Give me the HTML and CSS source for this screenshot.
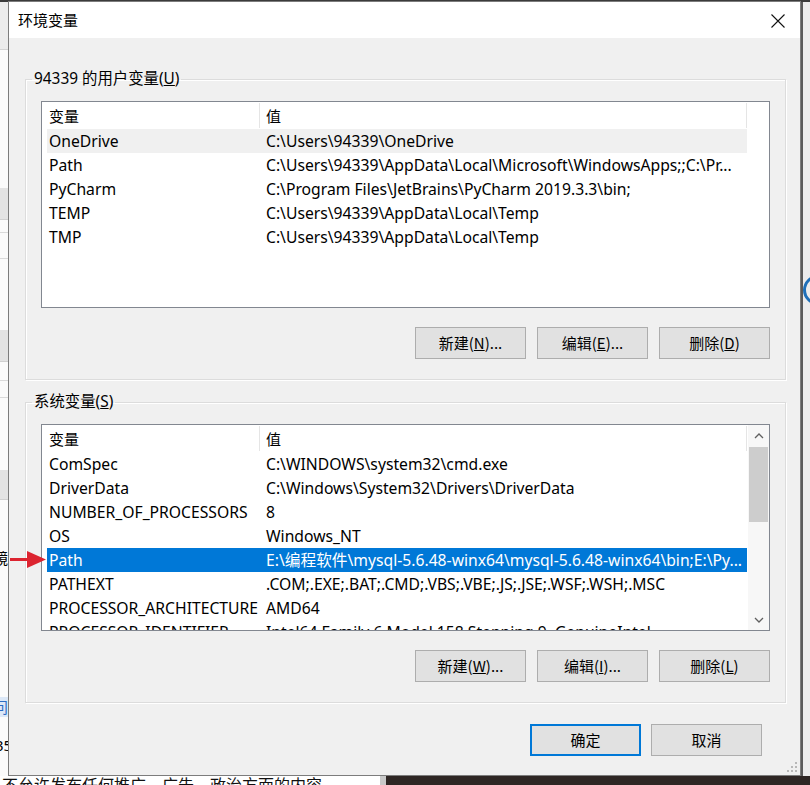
FILE: index.html
```html
<!DOCTYPE html>
<html lang="zh-CN">
<head>
<meta charset="utf-8">
<title>环境变量</title>
<link rel="stylesheet" href="styles.css">
</head>
<body>
<div class="desk">
  <div class="bg-left">
    <div class="band b1"></div>
    <div class="band b2"></div>
    <div class="band b3"></div>
    <div class="band b4"></div>
    <div class="band b5"></div>
    <div class="band b6"></div>
    <span class="bg-char c-jing">镜</span>
    <span class="bg-char c-wen">问</span>
    <span class="bg-char c-num">35</span>
  </div>
  <div class="bg-right">
    <div class="ring"></div>
  </div>
  <div class="bg-top"></div>
  <div class="bg-bottom">
    <span class="bg-text">不允许发布任何推广、广告、政治方面的内容</span>
    <div class="bg-sep"></div>
    <div class="bg-dark"></div>
  </div>

  <div class="dialog">
    <div class="titlebar">
      <span class="title">环境变量</span>
      <span class="close">
        <svg width="16" height="16" viewBox="0 0 16 16"><path d="M1.5 1.5 L14.5 14.5 M14.5 1.5 L1.5 14.5" stroke="#111" stroke-width="1.1" fill="none"/></svg>
      </span>
    </div>
    <div class="dlg-body">
      <fieldset class="group">
        <legend>94339 的用户变量(<u>U</u>)</legend>
        <div class="list">
          <div class="list-main">
            <div class="lhead"><div class="hc hc1">变量</div><div class="hc hc2">值</div></div>
            <div class="row inactive"><span class="c1">OneDrive</span><span class="c2">C:\Users\94339\OneDrive</span></div>
            <div class="row"><span class="c1">Path</span><span class="c2">C:\Users\94339\AppData\Local\Microsoft\WindowsApps;;C:\Pr...</span></div>
            <div class="row"><span class="c1">PyCharm</span><span class="c2">C:\Program Files\JetBrains\PyCharm 2019.3.3\bin;</span></div>
            <div class="row"><span class="c1">TEMP</span><span class="c2">C:\Users\94339\AppData\Local\Temp</span></div>
            <div class="row"><span class="c1">TMP</span><span class="c2">C:\Users\94339\AppData\Local\Temp</span></div>
          </div>
        </div>
        <div class="btns">
          <button class="btn">新建(<u>N</u>)...</button>
          <button class="btn">编辑(<u>E</u>)...</button>
          <button class="btn">删除(<u>D</u>)</button>
        </div>
      </fieldset>

      <fieldset class="group group2">
        <legend>系统变量(<u>S</u>)</legend>
        <div class="list">
          <div class="list-main">
            <div class="lhead"><div class="hc hc1">变量</div><div class="hc hc2">值</div></div>
            <div class="row"><span class="c1">ComSpec</span><span class="c2">C:\WINDOWS\system32\cmd.exe</span></div>
            <div class="row"><span class="c1">DriverData</span><span class="c2">C:\Windows\System32\Drivers\DriverData</span></div>
            <div class="row"><span class="c1">NUMBER_OF_PROCESSORS</span><span class="c2">8</span></div>
            <div class="row"><span class="c1">OS</span><span class="c2">Windows_NT</span></div>
            <div class="row selected"><span class="c1">Path</span><span class="c2">E:\编程软件\mysql-5.6.48-winx64\mysql-5.6.48-winx64\bin;E:\Py...</span></div>
            <div class="row"><span class="c1">PATHEXT</span><span class="c2">.COM;.EXE;.BAT;.CMD;.VBS;.VBE;.JS;.JSE;.WSF;.WSH;.MSC</span></div>
            <div class="row"><span class="c1">PROCESSOR_ARCHITECTURE</span><span class="c2">AMD64</span></div>
            <div class="row"><span class="c1">PROCESSOR_IDENTIFIER</span><span class="c2">Intel64 Family 6 Model 158 Stepping 9, GenuineIntel</span></div>
          </div>
          <div class="vscroll">
            <div class="sb-arrow">
              <svg width="10" height="6" viewBox="0 0 10 6"><path d="M1 5 L5 1 L9 5" stroke="#606060" stroke-width="1.3" fill="none"/></svg>
            </div>
            <div class="sb-thumb"></div>
            <div class="sb-track"></div>
            <div class="sb-arrow">
              <svg width="10" height="6" viewBox="0 0 10 6"><path d="M1 1 L5 5 L9 1" stroke="#606060" stroke-width="1.3" fill="none"/></svg>
            </div>
          </div>
        </div>
        <div class="btns">
          <button class="btn">新建(<u>W</u>)...</button>
          <button class="btn">编辑(<u>I</u>)...</button>
          <button class="btn">删除(<u>L</u>)</button>
        </div>
      </fieldset>

      <div class="footer">
        <button class="btn default">确定</button>
        <button class="btn">取消</button>
      </div>
    </div>
    <svg class="grip" width="12" height="12" viewBox="0 0 12 12">
      <rect x="9" y="1" width="2" height="2" fill="#b8b8b8"/>
      <rect x="5" y="5" width="2" height="2" fill="#b8b8b8"/>
      <rect x="9" y="5" width="2" height="2" fill="#b8b8b8"/>
      <rect x="1" y="9" width="2" height="2" fill="#b8b8b8"/>
      <rect x="5" y="9" width="2" height="2" fill="#b8b8b8"/>
      <rect x="9" y="9" width="2" height="2" fill="#b8b8b8"/>
    </svg>
  </div>

  <svg class="arrow" width="40" height="20" viewBox="0 0 40 20">
    <rect x="2" y="9" width="20" height="3" fill="#dc2430"/>
    <polygon points="19,2 38,10.5 19,19" fill="#dc2430"/>
  </svg>
</div>
</body>
</html>
```

FILE: styles.css
```css
* { box-sizing: border-box; }

body {
  margin: 0;
  font-family: "Segoe UI", "Noto Sans", "Noto Sans CJK SC", sans-serif;
  font-size: 15px;
  color: #000;
}

.desk {
  position: relative;
  width: 810px;
  height: 785px;
  overflow: hidden;
  background: #f4f4f4;
}

/* background windows */
.bg-top {
  position: absolute;
  left: 0; top: 0;
  width: 810px; height: 2px;
  background: #3b3b3b;
}

.bg-left {
  position: absolute;
  left: 0; top: 0;
  width: 9px; height: 785px;
  background: #fbfbfb;
  overflow: hidden;
}
.band { position: absolute; left: 0; width: 9px; background: #e3e3e3; }
.b1 { top: 2px; height: 48px; background: #ececec; border-bottom: 1px solid #d4d4d4; }
.b2 { top: 188px; height: 32px; border-bottom: 1px solid #d0d0d0; }
.b3 { top: 232px; height: 27px; background: #fbfbfb; border-top: 1px solid #dadada; border-bottom: 1px solid #dadada; }
.b4 { top: 330px; height: 32px; border-bottom: 1px solid #d0d0d0; }
.b5 { top: 380px; height: 18px; background: #fbfbfb; border-top: 1px solid #dadada; border-bottom: 1px solid #dadada; }
.b6 { top: 470px; height: 30px; border-bottom: 1px solid #d0d0d0; }
.bg-char {
  position: absolute;
  font-family: "Noto Sans CJK SC", sans-serif;
  font-size: 15px;
  line-height: 20px;
}
.c-jing { left: -7px; top: 548px; }
.c-wen { left: -7px; top: 697px; color: #2b6cc4; background: #dce8f7; }
.c-num { left: -5px; top: 735px; font-family: "Noto Sans", sans-serif; }

.bg-right {
  position: absolute;
  left: 800px; top: 0;
  width: 10px; height: 785px;
  background: #ececec;
  border-left: 3px solid #5a5a5a;
  overflow: hidden;
}
.ring {
  position: absolute;
  left: 0; top: 275px;
  width: 30px; height: 30px;
  border: 3px solid #1e6fb8;
  border-radius: 50%;
}

.bg-bottom {
  position: absolute;
  left: 0; top: 776px;
  width: 810px; height: 9px;
  background: #ffffff;
  display: flex;
}
.bg-text {
  width: 380px;
  padding-left: 2px;
  margin-top: -2px;
  font-family: "Noto Sans CJK SC", sans-serif;
  font-size: 16px;
  line-height: 20px;
  white-space: nowrap;
  overflow: hidden;
  color: #111;
}
.bg-sep { width: 6px; background: #c9c9c9; }
.bg-dark { flex: 1; background: #2e2624; }

/* dialog window */
.dialog {
  position: absolute;
  left: 8px; top: 1px;
  width: 793px; height: 775px;
  background: #f0f0f0;
  border: 1px solid #7c7c7c;
  display: flex;
  flex-direction: column;
}

.titlebar {
  height: 36px;
  background: #fff;
  display: flex;
  align-items: center;
  padding-left: 9px;
  flex: 0 0 36px;
}
.title {
  font-family: "Noto Sans CJK SC", sans-serif;
  font-size: 15px;
  line-height: 20px;
}
.close {
  margin-left: auto;
  width: 44px;
  height: 36px;
  display: flex;
  align-items: center;
  justify-content: center;
  padding-top: 2px;
}

.dlg-body {
  padding: 31px 14px 0 16px;
  display: flex;
  flex-direction: column;
}

.group {
  margin: 0;
  padding: 12px 15px 20px 15px;
  border: 1px solid #dcdcdc;
  box-shadow: inset 1px 1px 0 #fff, 1px 1px 0 #fff;
  min-width: 0;
}
.group2 { margin-top: 12px; }

legend {
  margin-left: -9px;
  padding: 0 2px;
  font-size: 15.4px;
  line-height: 20px;
  font-family: "Segoe UI", "Noto Sans", "Noto Sans CJK SC", sans-serif;
}

.list {
  height: 207px;
  background: #fff;
  border: 1px solid #828790;
  display: flex;
  overflow: hidden;
}
.list-main {
  width: 705px;
  flex: 0 0 705px;
  overflow: hidden;
}

.lhead {
  display: flex;
  height: 27px;
}
.hc {
  display: flex;
  align-items: center;
  border-right: 1px solid #e5e5e5;
  margin: 1px 0;
  font-family: "Noto Sans CJK SC", sans-serif;
}
.hc1 { width: 218px; padding-left: 7px; }
.hc2 { width: 487px; padding-left: 6px; }

.row {
  display: flex;
  align-items: center;
  height: 24px;
  margin-left: 5px;
  width: 700px;
  white-space: nowrap;
  line-height: 20px;
  font-size: 15.7px;
}
.row.inactive { background: #f0f0f0; }
.row.selected { background: #0078d7; color: #fff; }
.c1 { flex: 0 0 217px; padding-left: 2px; overflow: hidden; }
.c2 { flex: 1; padding-left: 2px; overflow: hidden; }

.vscroll {
  margin-left: 1px;
  width: 21px;
  background: #f7f7f7;
  display: flex;
  flex-direction: column;
}
.sb-arrow {
  height: 21px;
  flex: 0 0 21px;
  display: flex;
  align-items: center;
  justify-content: center;
}
.sb-thumb {
  flex: 0 0 75px;
  margin: 1px 1px 0 1px;
  background: #cdcdcd;
}
.sb-track { flex: 1; }

.btns {
  display: flex;
  justify-content: flex-end;
  gap: 11px;
  margin-top: 19px;
}

.btn {
  width: 111px;
  height: 32px;
  background: #e1e1e1;
  border: 1px solid #adadad;
  font-family: "Noto Sans CJK SC", sans-serif;
  font-size: 15px;
  color: #000;
  padding: 0;
  line-height: 20px;
}
.btn.default { border: 2px solid #0078d7; }

.footer {
  display: flex;
  justify-content: flex-end;
  gap: 10px;
  margin-top: 21px;
  padding-right: 24px;
}

.grip {
  position: absolute;
  right: 2px;
  bottom: 2px;
}

.arrow {
  position: absolute;
  left: 8px;
  top: 549px;
}
```
